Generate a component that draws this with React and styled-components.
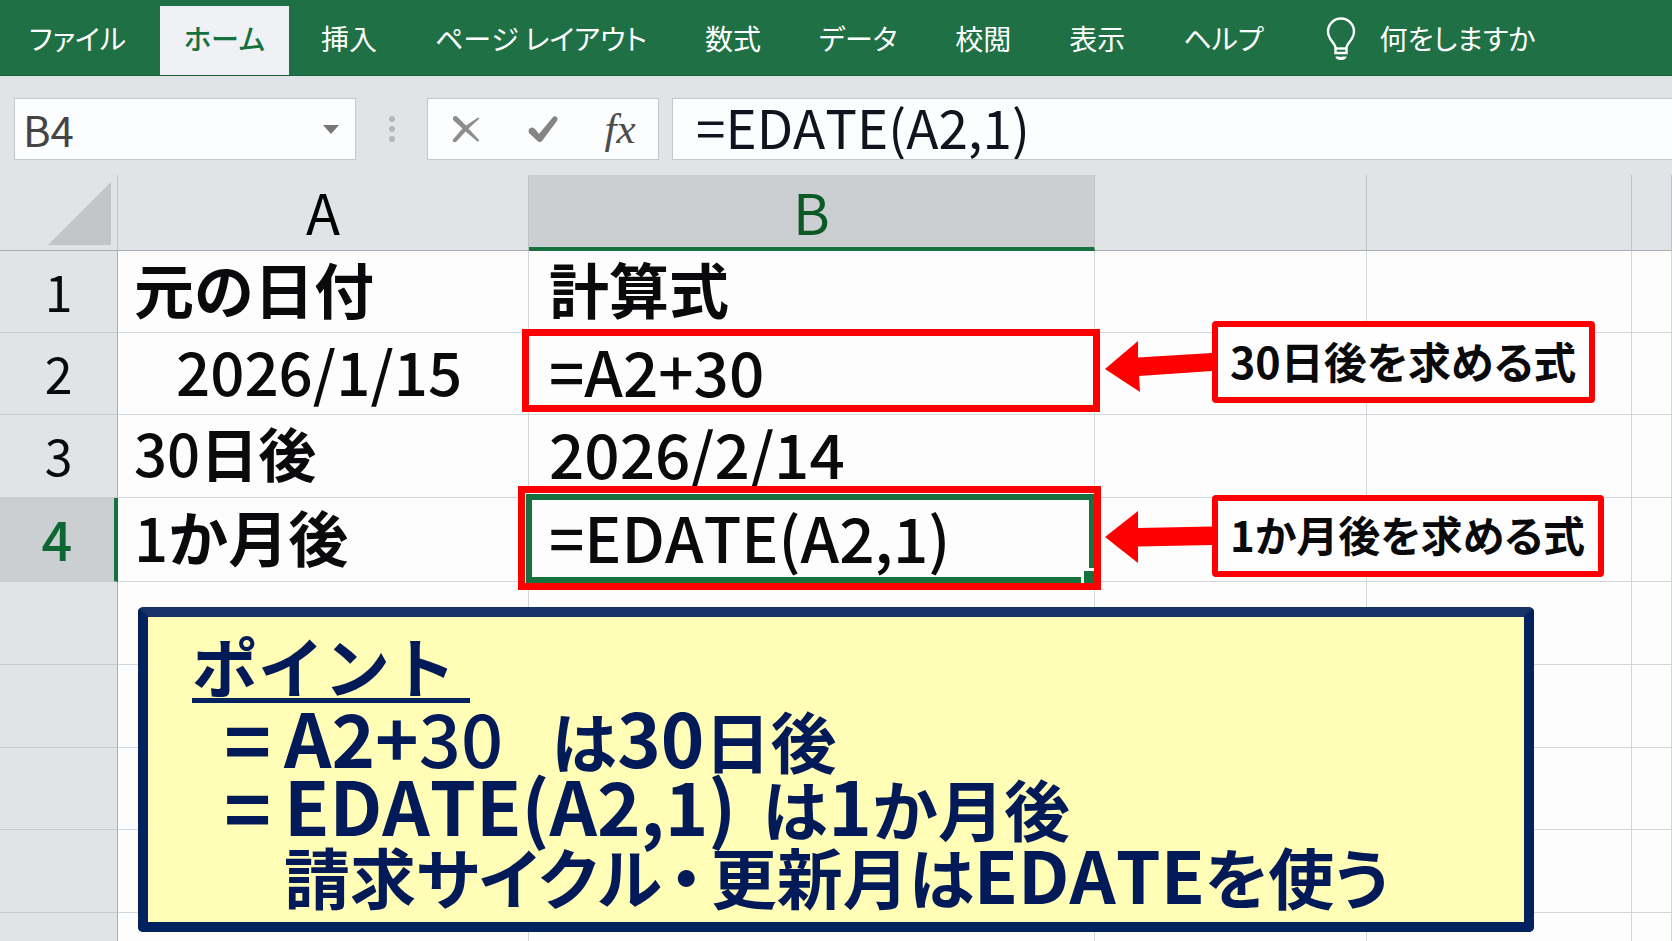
import React, { useState } from "react";
import styled, { createGlobalStyle, css } from "styled-components";

const sans = `"Noto Sans CJK JP", "Noto Sans", sans-serif`;

const color = {
  green: "#1f7145",
  select: "#16713f",
  deepGreen: "#0b5a25",
  chrome: "#e0e4e7",
  active: "#cccfd2",
  grid: "#d0d6dc",
  headerLine: "#a9adb1",
  red: "#fe0000",
  navy: "#02215f",
  ink: "#0a0a0c",
};

const GlobalStyle = createGlobalStyle`
  *, *::before, *::after { box-sizing: border-box; }
  body { margin: 0; background: #fdfdfe; font-family: ${sans}; font-kerning: none; color: ${color.ink}; }
  button, input { font-family: inherit; font-kerning: inherit; color: inherit; margin: 0; border: 0; background: none; }
`;

const Page = styled.div`
  display: flex;
  flex-direction: column;
  height: 100vh;
  overflow: hidden;
`;

/* Ribbon */

const Ribbon = styled.nav`
  display: flex;
  align-items: stretch;
  flex: none;
  height: 76px;
  padding-top: 6px;
  background: ${color.green};
  border-bottom: 1px solid #17613a;
`;

const Tab = styled.button`
  padding: 0 29px 5px;
  font-size: 28px;
  line-height: 40px;
  font-feature-settings: "palt";
  white-space: nowrap;
  color: #fff;
  cursor: pointer;
  ${(p) =>
    p.$kind === "file" &&
    css`
      width: 160px;
      padding-right: 34px;
    `}
  ${(p) =>
    p.$kind === "active" &&
    css`
      width: 129px;
      margin-right: 3px;
      padding-inline: 0;
      background: #eff1f4;
      color: ${color.select};
      font-weight: 500;
    `}
`;

const TellMe = styled(Tab)`
  display: flex;
  align-items: center;
  gap: 24px;
  padding-left: 33px;
`;

/* Formula bar */

const FormulaBar = styled.div`
  display: flex;
  flex: none;
  height: 99px;
  padding: 22px 0 15px 14px;
  background: ${color.chrome};
`;

const Box = styled.div`
  display: flex;
  align-items: center;
  height: 62px;
  background: #fcfdfe;
  border: 1px solid #c3c7ca;
`;

const NameBox = styled(Box)`
  width: 342px;
`;

const NameInput = styled.input`
  flex: 1;
  min-width: 0;
  height: 60px;
  padding: 0 0 2px 8px;
  font-size: 42px;
  color: #444;
`;

const IconButton = styled.button`
  display: flex;
  align-items: center;
  justify-content: center;
  width: ${(p) => p.$width}px;
  height: 60px;
  padding: 0;
  cursor: pointer;
`;

const Grip = styled.div`
  display: flex;
  flex-direction: column;
  align-items: center;
  justify-content: center;
  gap: 4px;
  width: 71px;
  height: 62px;
`;

const Dot = styled.span`
  width: 6px;
  height: 6px;
  border-radius: 50%;
  background: #b5b8ba;
`;

const Actions = styled(Box)`
  width: 232px;
  margin-right: 13px;
`;

const FormulaBox = styled(Box)`
  flex: 1;
  min-width: 0;
  border-right: 0;
`;

const FormulaInput = styled.input`
  flex: 1;
  min-width: 0;
  height: 60px;
  padding: 0 0 6px 23px;
  font-size: 53px;
  line-height: 54px;
  color: #12131f;
`;

/* Sheet */

const Sheet = styled.main`
  position: relative;
  flex: 1;
  min-height: 0;
`;

const Grid = styled.table`
  width: 100%;
  table-layout: fixed;
  border-collapse: separate;
  border-spacing: 0;
`;

const Col = styled.col`
  width: ${(p) => (p.$width ? `${p.$width}px` : "auto")};
`;

const Row = styled.tr`
  height: ${(p) => p.$height}px;
`;

const ColumnHead = styled.th`
  padding: ${(p) => (p.$active ? 0 : "0 0 4px")};
  font-size: 56px;
  line-height: 60px;
  font-weight: 400;
  background: ${(p) => (p.$active ? color.active : color.chrome)};
  color: ${(p) => (p.$active ? color.deepGreen : "#000")};
  border-right: 1px solid #c0c4c8;
  border-bottom: ${(p) =>
    p.$active ? `4px solid ${color.select}` : `1px solid ${color.headerLine}`};
`;

const Corner = styled(ColumnHead)`
  padding: 6px 6px 5px 0;
  line-height: 0;
  text-align: right;
`;

const RowHead = styled.th`
  padding: 0 0 4px;
  font-size: ${(p) => (p.$active ? 54 : 50)}px;
  line-height: 60px;
  font-weight: ${(p) => (p.$active ? 500 : 400)};
  background: ${(p) => (p.$active ? color.active : color.chrome)};
  color: ${(p) => (p.$active ? "#0e6632" : color.ink)};
  border-right: ${(p) =>
    p.$active ? `4px solid ${color.select}` : `1px solid ${color.headerLine}`};
  border-bottom: 1px solid #c6cbd0;
`;

const Cell = styled.td`
  position: relative;
  padding: 0 0 8px ${(p) => p.$indent ?? 20}px;
  font-size: ${(p) => p.$size ?? 60}px;
  line-height: 60px;
  font-weight: ${(p) => (p.$bold ? 700 : 500)};
  white-space: nowrap;
  border-right: 1px solid ${color.grid};
  border-bottom: 1px solid ${color.grid};
`;

const Numeral = styled.span`
  font-weight: 500;
`;

/* Annotations that float over the cells */

const Selection = styled.div`
  position: absolute;
  z-index: 1;
  inset: -4px -1px -2px -3px;
  border: 6px solid ${color.select};
`;

const FillHandle = styled.span`
  position: absolute;
  right: -6px;
  bottom: -6px;
  width: 14px;
  height: 15px;
  background: ${color.select};
  border: solid #fff;
  border-width: 3px 0 0 3px;
`;

const Highlight = styled.div`
  position: absolute;
  z-index: 1;
  inset: ${(p) => (p.$wide ? "-12px -7px -9px -11px" : "-4px -6px 2px -7px")};
  border: 7px solid ${color.red};
`;

const Callout = styled.div`
  position: absolute;
  z-index: 1;
  top: ${(p) => p.$top}px;
  left: 10px;
  display: flex;
  align-items: center;
`;

const CalloutLabel = styled.div`
  height: 82px;
  padding: 0 13px 0 12px;
  border: 6px solid ${color.red};
  border-radius: 4px;
  background: #fefefe;
  font-size: ${(p) => p.$size}px;
  line-height: 66px;
  font-weight: 700;
  font-feature-settings: "palt";
`;

const Note = styled.section`
  position: absolute;
  top: 432px;
  left: 138px;
  right: 138px;
  height: 325px;
  padding: 14px 0 0 44px;
  border: 10px solid ${color.navy};
  border-top-color: #173266;
  border-radius: 5px;
  background: #fffdb6;
  color: #021a58;
  font-weight: 700;
`;

const NoteTitle = styled.h2`
  width: fit-content;
  margin: 0 0 2px;
  padding-right: 14px;
  border-bottom: 5px solid ${color.navy};
  font-size: 66px;
  line-height: 67px;
  font-weight: 700;
`;

const NoteLine = styled.p`
  display: flex;
  margin: 0;
  padding-left: 32px;
  font-size: 66px;
  line-height: 68px;
  white-space: nowrap;
  font-feature-settings: ${(p) => (p.$tight ? `"palt"` : "normal")};
`;

const Equals = styled.span`
  width: 60px;
  font-size: 80px;
  line-height: 64px;
`;

const Latin = styled.span`
  margin-right: ${(p) => p.$gap ?? 0}px;
  font-size: ${(p) => p.$size ?? 74}px;
  line-height: 60px;
`;

const Light = styled.span`
  font-weight: 500;
`;

const MiddleDot = styled.span`
  margin: 0 8px;
`;

const Bulb = () => (
  <svg width="30" height="44" viewBox="0 0 30 44" fill="none" stroke="#fff" strokeWidth="2.4" aria-hidden="true">
    <path d="M9.500 37V32C9.500 27 2 24 2 15.500A13 13 0 0 1 28 15.500C28 24 20.500 27 20.500 32V37Z" />
    <path d="M9.500 32.500H20.500" />
    <path d="M11 40.500C11 43 19 43 19 40.500" strokeWidth="3" />
  </svg>
);

const Caret = () => (
  <svg width="16" height="9" viewBox="0 0 16 9" aria-hidden="true">
    <path d="M0 0H16L8 9Z" fill="#777" />
  </svg>
);

const Cross = () => (
  <svg width="28" height="28" viewBox="0 0 28 28" aria-hidden="true">
    <path d="M1 2.500Q3 0 5.500 2L14 10.500L26 2.500Q28 2.500 27 4L16.500 13.500L27 25Q27.500 27 25.500 26.500L13.500 16.500L4.500 26.500Q2.500 28 1 26.500Q.5 25.500 1 24.500L10.500 13.500L1 5Z" fill="#8d8d8d" />
  </svg>
);

const Check = () => (
  <svg width="30" height="28" viewBox="0 0 30 28" aria-hidden="true">
    <path d="M1 14Q4 11 7 14L11 19L25 2Q28 0 29.500 3Q29.500 5 28.500 6.500L14 26Q12 28 9.500 26L1 18Q0 16 1 14Z" fill="#858585" />
  </svg>
);

const FxText = styled.span`
  font-family: "Liberation Serif", serif;
  font-style: italic;
  font-size: 43px;
  line-height: 60px;
  color: #4c4c4c;
`;

const SelectAll = () => (
  <svg width="63" height="63" viewBox="0 0 63 63" aria-hidden="true">
    <path d="M63 0V63H0Z" fill="#c2c6c9" />
  </svg>
);

const Arrow = ({ tilt }) => (
  <svg width="107" height="60" viewBox="0 -3 107 60" aria-hidden="true">
    <path
      d={
        tilt
          ? "M0 34L33 6V22.500L107 18V36L34 41L35 57Z"
          : "M0 28L33 2V19L107 17.500V36L33 37.500V54Z"
      }
      fill={color.red}
    />
  </svg>
);

const tabs = ["挿入", "ページ レイアウト", "数式", "データ", "校閲", "表示", "ヘルプ"];
const emptyRows = [
  { n: 5, height: 83 },
  { n: 6, height: 83 },
  { n: 7, height: 82 },
  { n: 8, height: 83 },
  { n: 9, height: 83 },
];

const Blank = ({ count }) => Array.from({ length: count }, (_, i) => <Cell key={i} />);

export default function App() {
  const [name, setName] = useState("B4");
  const [formula, setFormula] = useState("=EDATE(A2,1)");

  return (
    <>
      <GlobalStyle />
      <Page>
        <Ribbon>
          <Tab $kind="file">ファイル</Tab>
          <Tab $kind="active">ホーム</Tab>
          {tabs.map((t) => (
            <Tab key={t}>{t}</Tab>
          ))}
          <TellMe>
            <Bulb />
            何をしますか
          </TellMe>
        </Ribbon>

        <FormulaBar>
          <NameBox>
            <NameInput aria-label="名前ボックス" value={name} onChange={(e) => setName(e.target.value)} />
            <IconButton $width={48} aria-label="名前の一覧">
              <Caret />
            </IconButton>
          </NameBox>
          <Grip>
            <Dot />
            <Dot />
            <Dot />
          </Grip>
          <Actions>
            <IconButton $width={76} aria-label="キャンセル">
              <Cross />
            </IconButton>
            <IconButton $width={78} aria-label="入力">
              <Check />
            </IconButton>
            <IconButton $width={76} aria-label="関数の挿入">
              <FxText>fx</FxText>
            </IconButton>
          </Actions>
          <FormulaBox>
            <FormulaInput aria-label="数式バー" value={formula} onChange={(e) => setFormula(e.target.value)} />
          </FormulaBox>
        </FormulaBar>

        <Sheet>
          <Grid>
            <colgroup>
              <Col $width={118} />
              <Col $width={411} />
              <Col $width={566} />
              <Col $width={272} />
              <Col $width={265} />
              <Col />
            </colgroup>
            <thead>
              <Row $height={76}>
                <Corner>
                  <SelectAll />
                </Corner>
                <ColumnHead>A</ColumnHead>
                <ColumnHead $active>B</ColumnHead>
                <ColumnHead />
                <ColumnHead />
                <ColumnHead />
              </Row>
            </thead>
            <tbody>
              <Row $height={82}>
                <RowHead>1</RowHead>
                <Cell $bold $indent={16}>元の日付</Cell>
                <Cell $bold>計算式</Cell>
                <Blank count={3} />
              </Row>
              <Row $height={82}>
                <RowHead>2</RowHead>
                <Cell $indent={58}>2026/1/15</Cell>
                <Cell $size={62}>
                  =A2+30
                  <Highlight />
                </Cell>
                <Cell>
                  <Callout $top={-12}>
                    <Arrow tilt />
                    <CalloutLabel $size={43}>30日後を求める式</CalloutLabel>
                  </Callout>
                </Cell>
                <Blank count={2} />
              </Row>
              <Row $height={83}>
                <RowHead>3</RowHead>
                <Cell $bold $indent={16} $size={58}>
                  <Numeral>30</Numeral>日後
                </Cell>
                <Cell $size={62}>2026/2/14</Cell>
                <Blank count={3} />
              </Row>
              <Row $height={84}>
                <RowHead $active>4</RowHead>
                <Cell $bold $indent={16}>
                  <Numeral>1</Numeral>か月後
                </Cell>
                <Cell $size={62}>
                  =EDATE(A2,1)
                  <Selection>
                    <FillHandle />
                  </Selection>
                  <Highlight $wide />
                </Cell>
                <Cell>
                  <Callout $top={-3}>
                    <Arrow />
                    <CalloutLabel $size={42}>1か月後を求める式</CalloutLabel>
                  </Callout>
                </Cell>
                <Blank count={2} />
              </Row>
              {emptyRows.map((r) => (
                <Row key={r.n} $height={r.height}>
                  <RowHead />
                  <Blank count={5} />
                </Row>
              ))}
            </tbody>
          </Grid>

          <Note>
            <NoteTitle>ポイント</NoteTitle>
            <NoteLine>
              <Equals>=</Equals>
              <span>
                <Latin $gap={48}>
                  A2+<Light>30</Light>
                </Latin>
                は<Latin>30</Latin>日後
              </span>
            </NoteLine>
            <NoteLine>
              <Equals>=</Equals>
              <span>
                <Latin $gap={26}>EDATE(A2,1)</Latin>
                は<Latin>1</Latin>か月後
              </span>
            </NoteLine>
            <NoteLine $tight>
              <Equals />
              <span>
                請求サイクル<MiddleDot>・</MiddleDot>更新月は<Latin $size={72}>EDATE</Latin>を使う
              </span>
            </NoteLine>
          </Note>
        </Sheet>
      </Page>
    </>
  );
}
